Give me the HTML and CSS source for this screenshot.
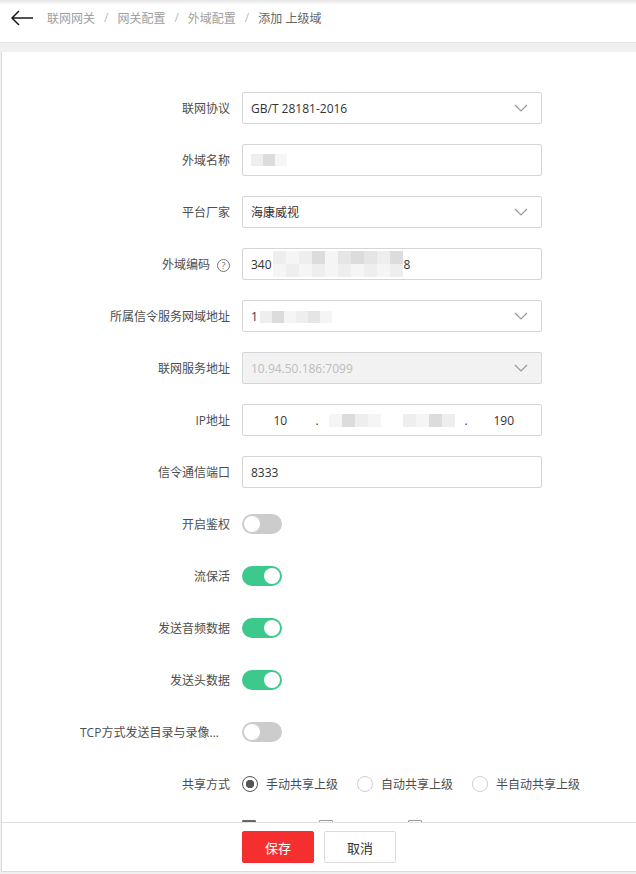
FILE: index.html
```html
<!DOCTYPE html>
<html lang="zh-CN">
<head>
  <meta charset="UTF-8" />
  <meta name="viewport" content="width=device-width, initial-scale=1" />
  <title>添加 上级域</title>
  <link rel="stylesheet" href="styles.css">
</head>
<body>

  <div class="topbar">
    <svg class="back" width="24" height="16" viewBox="0 0 24 16">
      <path d="M2 8 H23 M9 1 L2 8 L9 15" fill="none" stroke="#1a1a1a" stroke-width="1.5" />
    </svg>
    <span class="crumb">联网网关</span><span class="sep">/</span>
    <span class="crumb">网关配置</span><span class="sep">/</span>
    <span class="crumb">外域配置</span><span class="sep">/</span>
    <span class="crumb current">添加 上级域</span>
  </div>

  <div class="panel">
    <div class="form-body">

      <div class="row">
        <label class="lbl">联网协议</label>
        <div class="field select">
          <span>GB/T 28181-2016</span>
          <svg class="caret" width="14" height="8" viewBox="0 0 14 8"><path d="M1 1 L7 7 L13 1" fill="none" stroke="#999" stroke-width="1.2" /></svg>
        </div>
      </div>

      <div class="row">
        <label class="lbl">外域名称</label>
        <div class="field">
          <span class="mosaic m-name"><i class="c1"></i><i class="c3"></i><i class="c2"></i></span>
        </div>
      </div>

      <div class="row">
        <label class="lbl">平台厂家</label>
        <div class="field select">
          <span>海康威视</span>
          <svg class="caret" width="14" height="8" viewBox="0 0 14 8"><path d="M1 1 L7 7 L13 1" fill="none" stroke="#999" stroke-width="1.2" /></svg>
        </div>
      </div>

      <div class="row">
        <label class="lbl">外域编码 <span class="help">?</span></label>
        <div class="field">
          <span>340</span>
          <span class="mosaic m-code">
            <i class="c1"></i><i class="c2"></i><i class="c1"></i><i class="c3"></i><i class="c2"></i><i class="c4"></i><i class="c3"></i><i class="c4"></i><i class="c1"></i><i class="c3"></i>
            <i class="c2"></i><i class="c1"></i><i class="c2"></i><i class="c1"></i><i class="c2"></i><i class="c1"></i><i class="c2"></i><i class="c1"></i><i class="c2"></i><i class="c1"></i>
          </span>
          <span>8</span>
        </div>
      </div>

      <div class="row">
        <label class="lbl">所属信令服务网域地址</label>
        <div class="field select">
          <span>1<span class="mosaic m-addr"><i class="c1"></i><i class="c3"></i><i class="c2"></i><i class="c1"></i><i class="c4"></i><i class="c2"></i></span></span>
          <svg class="caret" width="14" height="8" viewBox="0 0 14 8"><path d="M1 1 L7 7 L13 1" fill="none" stroke="#999" stroke-width="1.2" /></svg>
        </div>
      </div>

      <div class="row">
        <label class="lbl">联网服务地址</label>
        <div class="field select disabled">
          <span>10.94.50.186:7099</span>
          <svg class="caret" width="14" height="8" viewBox="0 0 14 8"><path d="M1 1 L7 7 L13 1" fill="none" stroke="#999" stroke-width="1.2" /></svg>
        </div>
      </div>

      <div class="row">
        <label class="lbl">IP地址</label>
        <div class="field ip">
          <span class="seg">10</span>
          <span class="seg"><span class="dot">.</span><span class="mosaic m-ip"><i class="c2"></i><i class="c3"></i><i class="c1"></i><i class="c2"></i></span></span>
          <span class="seg"><span class="mosaic m-ip"><i class="c1"></i><i class="c2"></i><i class="c3"></i><i class="c1"></i></span></span>
          <span class="seg"><span class="dot">.</span>190</span>
        </div>
      </div>

      <div class="row">
        <label class="lbl">信令通信端口</label>
        <div class="field"><span>8333</span></div>
      </div>

      <div class="row">
        <label class="lbl">开启鉴权</label>
        <span class="switch"></span>
      </div>

      <div class="row">
        <label class="lbl">流保活</label>
        <span class="switch on"></span>
      </div>

      <div class="row">
        <label class="lbl">发送音频数据</label>
        <span class="switch on"></span>
      </div>

      <div class="row">
        <label class="lbl">发送头数据</label>
        <span class="switch on"></span>
      </div>

      <div class="row">
        <label class="lbl">TCP方式发送目录与录像信息</label>
        <span class="switch"></span>
      </div>

      <div class="row">
        <label class="lbl">共享方式</label>
        <div class="radios">
          <span class="radio checked">手动共享上级</span>
          <span class="radio">自动共享上级</span>
          <span class="radio">半自动共享上级</span>
        </div>
      </div>

      <div class="row checks">
        <label class="lbl"></label>
        <div class="radios">
          <span class="check checked">视频源</span>
          <span class="check">报警输入</span>
          <span class="check">报警输出</span>
        </div>
      </div>

    </div>

    <div class="footer">
      <button class="btn primary">保存</button>
      <button class="btn">取消</button>
    </div>
  </div>

</body>
</html>
```

FILE: styles.css
```css
body {
  margin: 0;
  height: 874px;
  overflow: hidden;
  background: #f0f0f0;
  font-family: "Open Sans", "Noto Sans CJK SC", sans-serif;
  font-size: 12px;
  color: #333;
}

/* top bar */
.topbar {
  height: 42px;
  display: flex;
  align-items: center;
  background: linear-gradient(#e6e6e6, #fff 5px);
  border-bottom: 1px solid #e2e2e2;
  padding-left: 10px;
}
.back {
  margin-right: 13px;
  margin-top: -7px;
}
.crumb {
  color: #a0a0a0;
  margin-top: -7px;
}
.crumb.current {
  color: #666;
}
.sep {
  color: #bbb;
  margin: -7px 9px 0;
}

/* panel */
.panel {
  margin: 9px 0 0 1px;
  height: 819px;
  background: #fff;
  border-left: 1px solid #dcdcdc;
  border-bottom: 1px solid #dcdcdc;
  display: flex;
  flex-direction: column;
}
.form-body {
  flex: 1;
  overflow: hidden;
  padding: 40px 0 0 78px;
}
.row {
  display: flex;
  align-items: center;
  height: 32px;
  margin-bottom: 20px;
}
.lbl {
  width: 162px;
  box-sizing: border-box;
  padding-right: 12px;
  text-align: right;
  color: #4d4d4d;
  white-space: nowrap;
  overflow: hidden;
  text-overflow: ellipsis;
  flex-shrink: 0;
}
.help {
  display: inline-block;
  width: 11px;
  height: 11px;
  line-height: 11px;
  border: 1px solid #777;
  border-radius: 50%;
  font-size: 9px;
  text-align: center;
  color: #666;
  margin-left: 4px;
  vertical-align: 0;
}

.field {
  width: 300px;
  height: 32px;
  box-sizing: border-box;
  border: 1px solid #d6d6d6;
  border-radius: 2px;
  display: flex;
  align-items: center;
  padding: 0 13px 0 8px;
  color: #333;
}
.select {
  justify-content: space-between;
}
.disabled {
  background: #f2f2f2;
  color: #bdbdbd;
}
.ip {
  padding: 0;
}
.seg {
  width: 75px;
  height: 100%;
  display: flex;
  align-items: center;
  justify-content: center;
  position: relative;
}
.dot {
  position: absolute;
  left: -2px;
  color: #333;
}

/* blurred values */
.mosaic {
  display: inline-grid;
  grid-auto-flow: column;
  grid-template-rows: 12px;
  vertical-align: middle;
}
.mosaic i {
  display: block;
  width: 12px;
  height: 12px;
}
.m-code {
  grid-template-rows: 13px 13px;
  grid-auto-flow: row;
  grid-template-columns: repeat(10, 13px);
  margin: 0 1px;
}
.m-code i {
  width: 13px;
  height: 13px;
}
.m-addr {
  margin-left: 2px;
}
.m-ip i {
  width: 13px;
  height: 13px;
}
.c1 { background: #eeeeee; }
.c2 { background: #f5f5f5; }
.c3 { background: #dcdcdc; }
.c4 { background: #e5e5e5; }

/* switches */
.switch {
  width: 40px;
  height: 20px;
  border-radius: 10px;
  background: #cccccc;
  position: relative;
}
.switch::after {
  content: "";
  position: absolute;
  top: 2px;
  left: 2px;
  width: 16px;
  height: 16px;
  border-radius: 50%;
  background: #fff;
}
.switch.on {
  background: #3ec98c;
}
.switch.on::after {
  left: 22px;
}

/* radios & checks */
.radios {
  display: flex;
  gap: 19px;
}
.radio, .check {
  display: flex;
  align-items: center;
  color: #4d4d4d;
}
.radio::before {
  content: "";
  width: 14px;
  height: 14px;
  border: 1px solid #cfcfcf;
  border-radius: 50%;
  margin-right: 8px;
  box-sizing: content-box;
}
.radio.checked::before {
  border-color: #555;
  background: radial-gradient(#555 0 4px, #fff 4.5px);
}
.checks {
  align-items: flex-start;
}
.check {
  align-items: flex-start;
}
.check::before {
  content: "";
  width: 12px;
  height: 12px;
  border: 1px solid #999;
  border-radius: 1px;
  margin-right: 8px;
}
.check.checked::before {
  background: #666;
  border-color: #666;
}

/* footer */
.footer {
  height: 48px;
  border-top: 1px solid #e0e0e0;
  display: flex;
  align-items: center;
  gap: 10px;
  padding-left: 240px;
  flex-shrink: 0;
}
.btn {
  width: 72px;
  height: 32px;
  border: 1px solid #dcdcdc;
  border-radius: 2px;
  background: #fff;
  color: #333;
  font-family: inherit;
  font-size: 13px;
}
.btn.primary {
  background: #f52f2f;
  border-color: #f52f2f;
  color: #fff;
}
```
